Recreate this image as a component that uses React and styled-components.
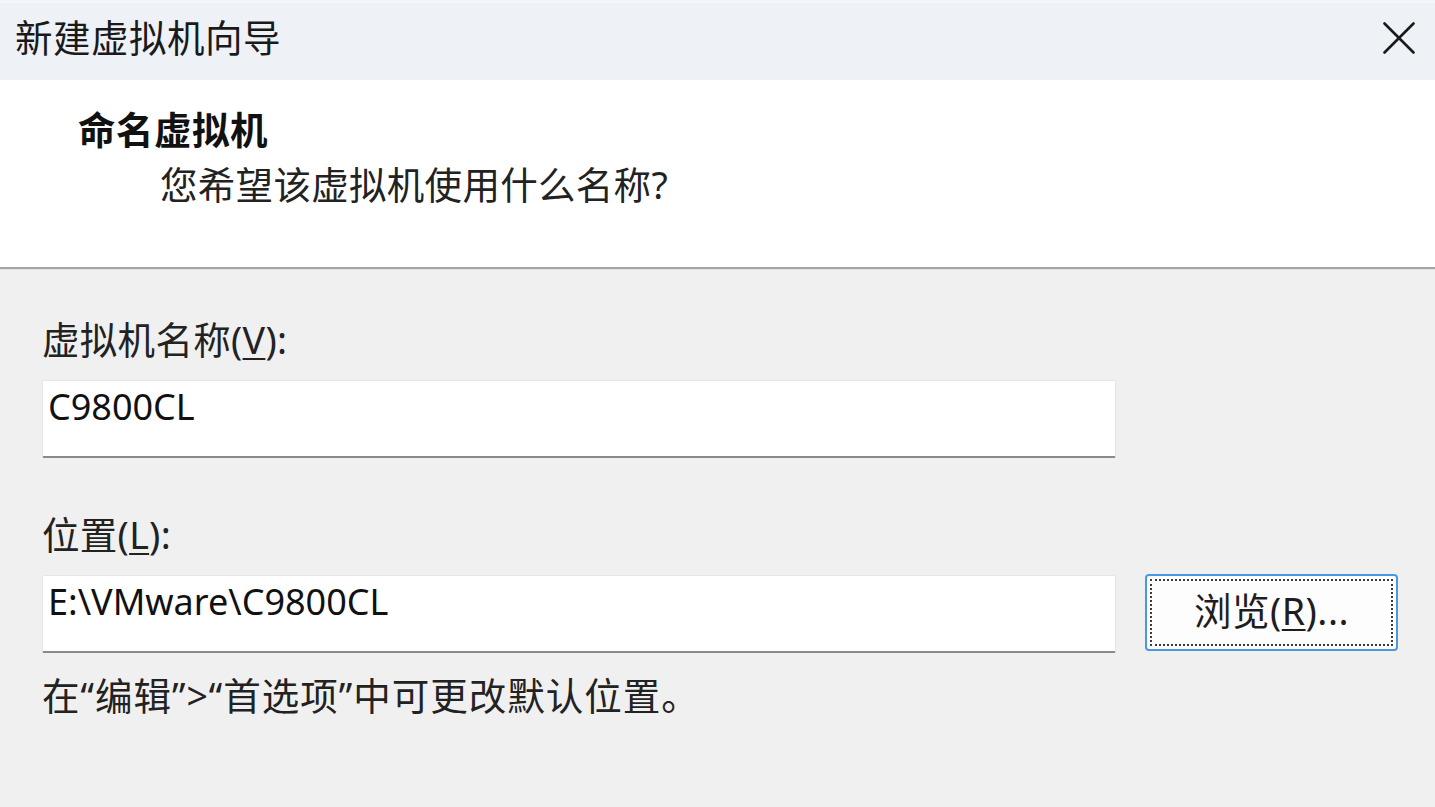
import React from 'react'
import styled, { createGlobalStyle } from 'styled-components';

const GlobalStyle = createGlobalStyle`
    html, body {
        margin: 0;
        padding: 0;
        background: #f0f0f0;
    }
    body {
        font-family: "Noto Sans", "Noto Sans CJK SC", sans-serif;
        color: #1e1e1e;
    }
`;

const CloseIcon = () => (
    <svg width="32" height="32" viewBox="0 0 32 32">
        <path d="M1.5 1.5 L30.5 30.5 M30.5 1.5 L1.5 30.5" stroke="#1a1a1a" strokeWidth="2.6" strokeLinecap="round" fill="none" />
    </svg>
);

const App = () => {
    return (
        <>
            <GlobalStyle />
            <Window>
                <TitleBar>
                    <WindowTitle>新建虚拟机向导</WindowTitle>
                    <CloseButton><CloseIcon /></CloseButton>
                </TitleBar>
                <Header>
                    <StepTitle>命名虚拟机</StepTitle>
                    <StepDesc>您希望该虚拟机使用什么名称?</StepDesc>
                </Header>
                <Body>
                    <FieldLabel>虚拟机名称(<u>V</u>):</FieldLabel>
                    <FieldRow>
                        <TextBox>C9800CL</TextBox>
                    </FieldRow>
                    <FieldLabel $gap={55}>位置(<u>L</u>):</FieldLabel>
                    <FieldRow>
                        <TextBox>E:\VMware\C9800CL</TextBox>
                        <BrowseButton>浏览(<u>R</u>)...</BrowseButton>
                    </FieldRow>
                    <Hint>在“编辑”&gt;“首选项”中可更改默认位置。</Hint>
                </Body>
            </Window>
        </>
    )
}

const Window = styled.div`
    width: 1435px;
    height: 807px;
    overflow: hidden;
    display: flex;
    flex-direction: column;
    background: #f0f0f0;
`;

const TitleBar = styled.div`
    height: 80px;
    flex-shrink: 0;
    box-sizing: border-box;
    padding: 0 20px 8px 15px;
    display: flex;
    align-items: center;
    justify-content: space-between;
    background: #eef2f7;
    border-top: 3px solid #f4f7fa;
`;

const WindowTitle = styled.div`
    font-size: 37.5px;
    line-height: 44px;
    color: #1a1a1a;
    letter-spacing: 0.5px;
`;

const CloseButton = styled.div`
    width: 32px;
    height: 32px;
    display: flex;
`;

const Header = styled.div`
    height: 189px;
    flex-shrink: 0;
    box-sizing: border-box;
    padding: 28px 0 0 78px;
    background: #ffffff;
    border-bottom: 2px solid #a6a6a6;
`;

const StepTitle = styled.div`
    font-size: 37.5px;
    line-height: 44px;
    font-weight: 700;
    color: #111;
    letter-spacing: 0.5px;
`;

const StepDesc = styled.div`
    margin-top: 11px;
    padding-left: 82px;
    font-size: 37.5px;
    line-height: 44px;
    color: #222;
    letter-spacing: 0.3px;
`;

const Body = styled.div`
    flex: 1;
    padding: 48px 37px 0 42px;
    border-top: 1px solid #e2e2e2;
    background: #f0f0f0;
`;

const FieldLabel = styled.div`
    margin-top: ${p => p.$gap || 0}px;
    font-size: 37.5px;
    line-height: 44px;
    color: #222;
    letter-spacing: 0.3px;

    u {
        text-decoration-thickness: 2px;
        text-underline-offset: 4px;
    }
`;

const FieldRow = styled.div`
    margin-top: 18px;
    display: flex;
    align-items: flex-start;
    gap: 29px;
`;

const TextBox = styled.div`
    width: 1074px;
    height: 78px;
    box-sizing: border-box;
    padding: 4px 5px 0;
    background: #ffffff;
    border: 1px solid #e6e6e6;
    border-bottom: 2px solid #8a8a8a;
    border-radius: 2px;
    font-family: "Noto Sans", sans-serif;
    font-size: 36px;
    line-height: 44px;
    color: #111;
    white-space: nowrap;
`;

const BrowseButton = styled.button`
    position: relative;
    width: 253px;
    height: 77px;
    margin-top: -1px;
    box-sizing: border-box;
    background: #fdfdfd;
    border: 2px solid #4a98e2;
    border-radius: 4px;
    font-family: "Noto Sans", "Noto Sans CJK SC", sans-serif;
    font-size: 37.5px;
    line-height: 44px;
    color: #1e1e1e;
    padding: 0 0 4px;
    letter-spacing: 0.5px;

    &::before {
        content: '';
        position: absolute;
        inset: 3px;
        border: 2px dotted #3a3a3a;
        border-radius: 1px;
    }

    u {
        text-decoration-thickness: 2px;
        text-underline-offset: 4px;
    }
`;

const Hint = styled.div`
    margin-top: 21px;
    font-size: 37.5px;
    line-height: 44px;
    color: #222;
    letter-spacing: 1px;
`;

export default App;
